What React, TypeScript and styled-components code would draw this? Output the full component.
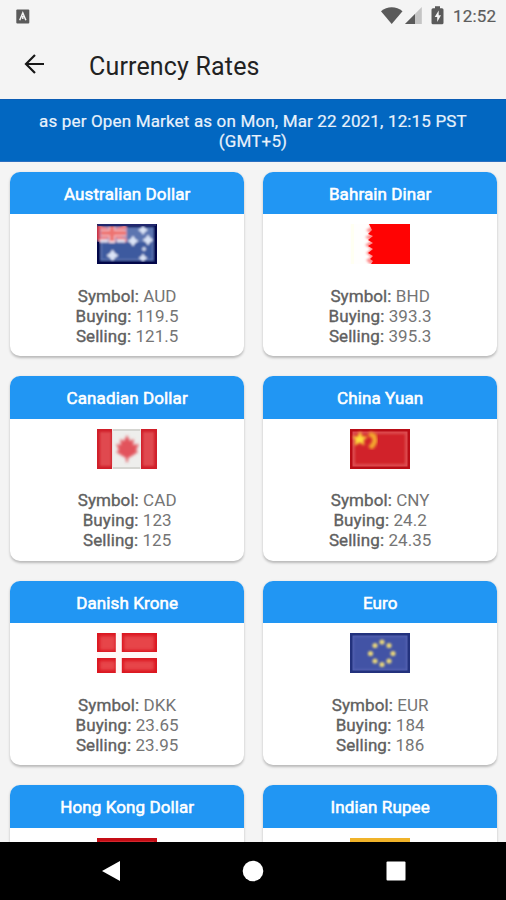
import React from "react";
import styled, { createGlobalStyle } from "styled-components";

const GlobalStyle = createGlobalStyle`
  * { box-sizing: border-box; }
  body { margin: 0; background: #f4f4f4; font-family: Roboto, sans-serif; }
`;

const Screen = styled.div`
  display: flex;
  flex-direction: column;
  width: 506px;
  height: 900px;
  overflow: hidden;
  background: #f4f4f4;
`;

const StatusBar = styled.div`
  display: flex;
  align-items: center;
  justify-content: space-between;
  height: 32px;
  padding: 0 9px 0 16px;
  flex: none;
`;

const StatusIcons = styled.div`
  display: flex;
  align-items: center;
`;

const Clock = styled.span`
  margin-left: 9px;
  width: 44px;
  font-size: 17px;
  line-height: 32px;
  letter-spacing: 0.2px;
  color: #5c5c5c;
  -webkit-text-stroke: 0.2px #5c5c5c;
`;

const AppBar = styled.header`
  display: flex;
  align-items: center;
  height: 67px;
  padding-left: 22px;
  flex: none;
`;

const BackButton = styled.button`
  display: flex;
  padding: 0;
  margin: 0 43px 3px 0;
  border: 0;
  background: none;
`;

const Title = styled.h1`
  margin: 0;
  padding-top: 1px;
  font-size: 25px;
  font-weight: 400;
  line-height: 67px;
  letter-spacing: 0.17px;
  color: #222;
`;

const Banner = styled.div`
  display: flex;
  align-items: center;
  justify-content: center;
  height: 63px;
  padding: 1px 30px 0;
  border-top: 1px solid #0b5cb4;
  border-bottom: 1px solid #2b6fc0;
  background: #0267c1;
  color: #e9f2fc;
  font-size: 17px;
  line-height: 20px;
  letter-spacing: 0.16px;
  text-align: center;
  -webkit-text-stroke: 0.2px #e9f2fc;
  flex: none;
`;

const RateGrid = styled.main`
  display: grid;
  grid-template-columns: 234px 234px;
  grid-auto-rows: 184.6px;
  gap: 20px 19px;
  padding: 9.5px 0 0 10.2px;
  flex: 1;
  min-height: 0;
  overflow: hidden;
`;

const Card = styled.section`
  display: flex;
  flex-direction: column;
  align-items: center;
  border-radius: 10px;
  overflow: hidden;
  background: #fff;
  box-shadow: 0 1.5px 2.5px rgba(0, 0, 0, 0.24);
`;

const CardHeader = styled.h2`
  width: 100%;
  height: 42.5px;
  margin: 0 0 10px;
  background: #2196f3;
  color: #fff;
  font-size: 17px;
  font-weight: 400;
  line-height: 44px;
  letter-spacing: 0.1px;
  text-align: center;
  -webkit-text-stroke: 0.55px #fff;
  flex: none;
`;

const FlagSvg = styled.svg`
  display: block;
  width: 60px;
  height: 40px;
  margin-bottom: 21.7px;
  flex: none;
`;

const RateLine = styled.div`
  height: 20px;
  font-size: 17px;
  line-height: 20px;
  letter-spacing: 0.08px;
  color: #757575;
  white-space: nowrap;
`;

const Label = styled.span`
  color: #606060;
  -webkit-text-stroke: 0.35px #606060;
`;

const NavBar = styled.nav`
  display: grid;
  grid-template-columns: repeat(3, 143px);
  align-items: center;
  justify-content: center;
  justify-items: center;
  height: 58.5px;
  background: #000;
  flex: none;
`;

type FlagKind = "au" | "bh" | "ca" | "cn" | "dk" | "eu" | "hk" | "in";

const Star = ({ x, y, r }: { x: number; y: number; r: number }) => (
  <path
    d={`M${x} ${y - r}L${x + r * 0.4} ${y - r * 0.4}L${x + r} ${y}L${x + r * 0.4} ${y + r * 0.4}L${x} ${y + r}L${x - r * 0.4} ${y + r * 0.4}L${x - r} ${y}L${x - r * 0.4} ${y - r * 0.4}Z`}
    fill="#dbe4f6"
  />
);

const flagArt: Record<FlagKind, React.ReactNode> = {
  au: (
    <>
      <rect width="60" height="40" fill="#06104f" />
      <g filter="url(#soft-au)">
        <rect x="3" y="3" width="54" height="34" fill="#5b74b0" />
        <rect x="5" y="18" width="50" height="17" fill="#3e5a9f" />
        <path d="M2 2h28v16H2z" fill="#b58fb2" />
        <path d="M1 2l28 15M29 2L1 17" stroke="#ee8389" strokeWidth="4" />
        <path d="M15 2v17M4 9h25" stroke="#f3dbe4" strokeWidth="6" />
        <path d="M15 2v15M4 9h25" stroke="#ee7371" strokeWidth="4.5" />
        <path d="M1 2v14" stroke="#d63a4a" strokeWidth="4" />
        <path d="M3 17h8M20 17h8" stroke="#e5e2f0" strokeWidth="3" />
        <Star x={15.5} y={31.5} r={6} />
        <Star x={36} y={17} r={5.5} />
        <Star x={46} y={6} r={5} />
        <Star x={51} y={16} r={5.5} />
        <Star x={46} y={34} r={4.5} />
        <Star x={47} y={25} r={2.6} />
      </g>
      <path d="M1 18v21h58V1" fill="none" stroke="#020749" strokeWidth="2" />
      <path d="M1 1h58" stroke="#21276d" strokeWidth="2" />
    </>
  ),
  bh: (
    <>
      <rect width="60" height="40" fill="#fffefd" />
      <rect x="1" width="3" height="40" fill="#fffff2" />
      <path d="M19 0h41v40H20l-4-4 5-3-5-4 5-4-6-4 6-4-6-4 6-3-5-4 5-3z" fill="#fe8d8d" filter="url(#soft-bh)" />
      <path d="M19 0h41v40H21l2-3-3-2 3-3-5-3 5-4-5-3 5-3-5-3 5-4-5-2 4-4z" fill="#ff0303" />
    </>
  ),
  ca: (
    <>
      <rect width="60" height="40" fill="#eeeeec" />
      <path d="M0 0h15v40H0zM44 0h16v40H44z" fill="#d01f29" />
      <path d="M3 3h11v34H3zM46 3h11v34H46z" fill="#e0494f" filter="url(#soft-ca)" />
      <path d="M16 1h27M16 39h27" stroke="#d5d5d1" strokeWidth="2" />
      <path d="M30 6l3 6 4-2-1 6 6-1-3 6 2 2-8 5-2 1v4h-2v-4l-10-6 3-2-3-6 5 1-1-6 4 2z" fill="#e2525b" filter="url(#softer-ca)" />
    </>
  ),
  cn: (
    <>
      <rect width="60" height="40" fill="#b90d16" />
      <rect x="2.5" y="2.5" width="55" height="35" fill="#dd4d50" />
      <path d="M5 5h50v30H5z" fill="#d1232b" filter="url(#soft-cn)" />
      <g filter="url(#softer-cn)">
        <path d="M10 3l2 5h5l-4 3 1 5-4-3-5 3 1-5-3-3h5z" fill="#ffdf3d" stroke="#ffdf3d" />
        <path d="M19 5l5 2 1 5-2 4-3 3" fill="none" stroke="#f5a92f" strokeWidth="5" />
      </g>
    </>
  ),
  dk: (
    <>
      <rect width="60" height="40" fill="#db1720" />
      <path d="M3 3h15v14H3zM27 3h30v14H27zM3 28h15v9H3zM27 28h30v9H27z" fill="#e74448" filter="url(#softer-dk)" />
      <path d="M21.8 0v40M0 22h60" stroke="#fff7f6" strokeWidth="6" />
    </>
  ),
  eu: (
    <>
      <rect width="60" height="40" fill="#23327d" />
      <rect x="2.5" y="2.5" width="55" height="35" fill="#5260b0" />
      <rect x="4" y="4" width="52" height="32" fill="#4353a5" filter="url(#soft-eu)" />
      <g fill="#e6d47c" filter="url(#soft-eu)">
        {[[32, 9], [39, 12.5], [43, 20.5], [39, 28], [32, 31.5], [25, 28], [20.5, 20.5], [25, 12.5]].map(([cx, cy]) => (
          <circle key={`${cx}-${cy}`} cx={cx} cy={cy} r="2.6" />
        ))}
      </g>
    </>
  ),
  hk: (
    <>
      <rect width="60" height="40" fill="#c40d15" />
      <rect x="3" y="3" width="54" height="34" fill="#d2262d" />
    </>
  ),
  in: (
    <>
      <rect width="60" height="40" fill="#f0b32a" />
      <rect y="13" width="60" height="14" fill="#fff" />
      <rect y="27" width="60" height="13" fill="#2c8a3a" />
    </>
  ),
};

const Flag = ({ kind }: { kind: FlagKind }) => (
  <FlagSvg viewBox="0 0 60 40">
    <defs>
      <filter id={`soft-${kind}`}>
        <feGaussianBlur stdDeviation="0.9" />
      </filter>
      <filter id={`softer-${kind}`}>
        <feGaussianBlur stdDeviation="1.4" />
      </filter>
    </defs>
    {flagArt[kind]}
  </FlagSvg>
);

interface Rate {
  name: string;
  flag: FlagKind;
  symbol: string;
  buying: string;
  selling: string;
}

const rates: Rate[] = [
  { name: "Australian Dollar", flag: "au", symbol: "AUD", buying: "119.5", selling: "121.5" },
  { name: "Bahrain Dinar", flag: "bh", symbol: "BHD", buying: "393.3", selling: "395.3" },
  { name: "Canadian Dollar", flag: "ca", symbol: "CAD", buying: "123", selling: "125" },
  { name: "China Yuan", flag: "cn", symbol: "CNY", buying: "24.2", selling: "24.35" },
  { name: "Danish Krone", flag: "dk", symbol: "DKK", buying: "23.65", selling: "23.95" },
  { name: "Euro", flag: "eu", symbol: "EUR", buying: "184", selling: "186" },
  { name: "Hong Kong Dollar", flag: "hk", symbol: "", buying: "", selling: "" },
  { name: "Indian Rupee", flag: "in", symbol: "", buying: "", selling: "" },
];

const RateCard = ({ rate }: { rate: Rate }) => (
  <Card>
    <CardHeader>{rate.name}</CardHeader>
    <Flag kind={rate.flag} />
    {rate.symbol && (
      <>
        <RateLine><Label>Symbol:</Label> {rate.symbol}</RateLine>
        <RateLine><Label>Buying:</Label> {rate.buying}</RateLine>
        <RateLine><Label>Selling:</Label> {rate.selling}</RateLine>
      </>
    )}
  </Card>
);

export default function App() {
  return (
    <>
      <GlobalStyle />
      <Screen>
        <StatusBar>
          <svg width="14" height="15" viewBox="0 0 14 15">
            <rect x="0.3" y="0.5" width="13" height="14" rx="1" fill="#5b5b5b" />
            <path d="M3.7 11.2L6.8 4l3.1 7.2M6.8 7v3" fill="none" stroke="#f4f4f4" strokeWidth="1.5" />
          </svg>
          <StatusIcons>
            <svg width="64" height="20" viewBox="0 0 64 20">
              <path d="M1 5.3C7-.2 16.5-.2 22.5 5.3L11.7 18z" fill="#5a5a5a" />
              <path d="M41.8 1v17H25z" fill="#c4c4c4" />
              <path d="M35 8v10H25z" fill="#5a5a5a" />
              <path d="M55 .3h5v2h2q1.5 0 1.5 1.5v13q0 1.5-1.5 1.5h-9q-1.5 0-1.5-1.5v-13q0-1.5 1.5-1.5h2z" fill="#5a5a5a" />
              <path d="M58.7 4.5l-4 6.5h2.5v5l3.8-6.7h-2.3z" fill="#f4f4f4" />
            </svg>
            <Clock>12:52</Clock>
          </StatusIcons>
        </StatusBar>
        <AppBar>
          <BackButton aria-label="Back">
            <svg width="24" height="22" viewBox="0 0 24 22">
              <path d="M22 11H4M13 2l-9 9 9 9" fill="none" stroke="#181818" strokeWidth="2.2" />
            </svg>
          </BackButton>
          <Title>Currency Rates</Title>
        </AppBar>
        <Banner>
          as per Open Market as on Mon, Mar 22 2021, 12:15 PST
          <br />
          (GMT+5)
        </Banner>
        <RateGrid>
          {rates.map((rate) => <RateCard key={rate.name} rate={rate} />)}
        </RateGrid>
        <NavBar>
          <svg width="20" height="22" viewBox="0 0 20 22"><path d="M20 1v20L2 11z" fill="#fff" /></svg>
          <svg width="22" height="22" viewBox="0 0 22 22"><circle cx="11" cy="11" r="10.3" fill="#fff" /></svg>
          <svg width="20" height="20" viewBox="0 0 20 20"><rect x="0.5" y="0.5" width="19" height="19" rx="1" fill="#fff" /></svg>
        </NavBar>
      </Screen>
    </>
  );
}
